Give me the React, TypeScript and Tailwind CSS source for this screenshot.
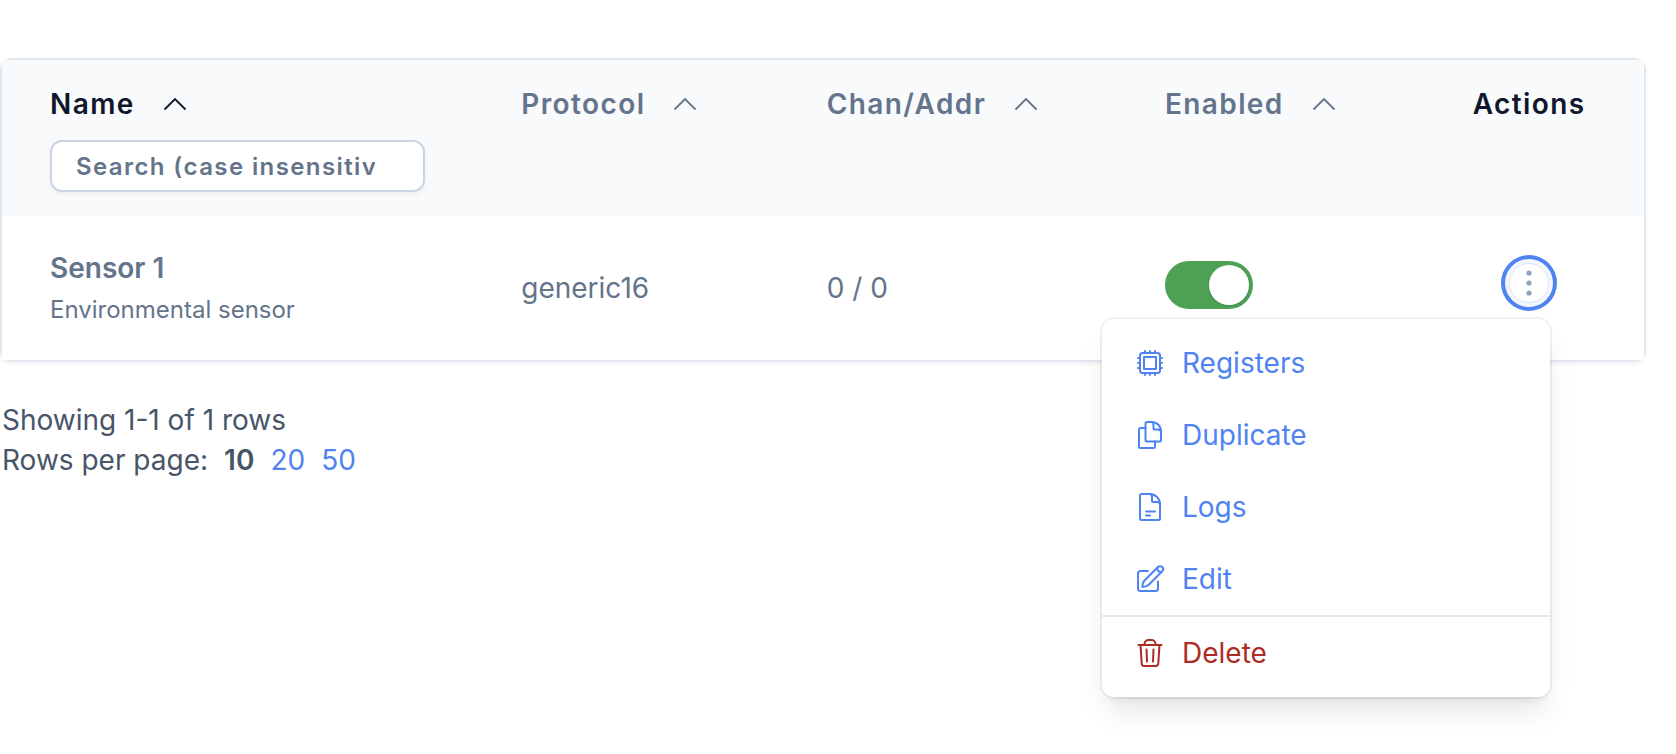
import { useState, type ReactNode } from "react";
import clsx from "clsx";

type IconProps = {
  children: ReactNode;
};

function MenuIcon({ children }: IconProps) {
  return (
    <svg
      className="h-8 w-8 shrink-0"
      viewBox="0 0 32 32"
      fill="none"
      stroke="currentColor"
      strokeWidth={2}
      strokeLinecap="round"
      strokeLinejoin="round"
      aria-hidden="true"
    >
      {children}
    </svg>
  );
}

const menuItems = [
  {
    label: "Registers",
    icon: (
      <MenuIcon>
        <rect x="6" y="6" width="20" height="20" rx="2.5" />
        <rect x="10" y="10" width="12" height="12" />
        <path d="M11 6V4M16 6V4M21 6V4M11 28v-2M16 28v-2M21 28v-2M6 11H4M6 16H4M6 21H4M28 11h-2M28 16h-2M28 21h-2" />
      </MenuIcon>
    ),
  },
  {
    label: "Duplicate",
    icon: (
      <MenuIcon>
        <path d="M17.5 3H13a1.500 1.500 0 0 0-1.500 1.500v16.500a1.500 1.500 0 0 0 1.500 1.500h12.500a1.500 1.500 0 0 0 1.500-1.500V12.500C27 7 23 3 17.500 3z" />
        <path d="M17.500 3c1.500 0 2 1 2 2.500v4a1 1 0 0 0 1 1h3c2 0 3.500 1 3.500 2.500" />
        <path d="M11.500 9H6.500A1.500 1.500 0 0 0 5 10.500v17A1.500 1.500 0 0 0 6.500 29H19.500a1.500 1.500 0 0 0 1.500-1.500v-5" />
      </MenuIcon>
    ),
  },
  {
    label: "Logs",
    icon: (
      <MenuIcon>
        <path d="M15.500 3H7.500A1.500 1.500 0 0 0 6 4.500v23A1.500 1.500 0 0 0 7.500 29h17a1.500 1.500 0 0 0 1.500-1.500v-14C26 7.500 21.500 3 15.500 3z" />
        <path d="M15.500 3c2 0 2.500 1 2.500 2.500V10a1 1 0 0 0 1 1h4.500c1.500 0 2.500 1 2.500 2.500" />
        <path d="M12 20.500h9M12 24.500h4" />
      </MenuIcon>
    ),
  },
  {
    label: "Edit",
    icon: (
      <MenuIcon>
        <path d="M14 8H6.500A2.500 2.500 0 0 0 4 10.500v15A2.500 2.500 0 0 0 6.500 28h15a2.500 2.500 0 0 0 2.500-2.500V18.500" />
        <path d="M8.500 24c0-3 .5-5 2-6.500L24 4a2.900 2.900 0 0 1 4.200 4.200L15 21.500c-1.500 1.500-3.500 2.500-6.500 2.500z" />
        <path d="M23.200 4.800c0 2.500 1.700 4.200 4.200 4.200" />
      </MenuIcon>
    ),
  },
];

const deleteIcon = (
  <MenuIcon>
    <path d="M4.500 8h23M10.500 8V7A4 4 0 0 1 14.500 3h3A4 4 0 0 1 21.500 7v1" />
    <path d="M6.500 8l1.200 18.500a2.500 2.500 0 0 0 2.500 2.500h11.600a2.500 2.500 0 0 0 2.500-2.500L25.500 8M12.500 12.500l.5 12M19.500 12.500l-.5 12" />
  </MenuIcon>
);

const columns = [
  { label: "Name", width: "w-[28.7%]", sorted: true, searchable: true },
  { label: "Protocol", width: "w-[18.6%]" },
  { label: "Chan/Addr", width: "w-[20.6%]" },
  { label: "Enabled", width: "w-[18.1%]" },
];

function SortChevron() {
  return (
    <svg className="h-6 w-6" viewBox="0 0 24 24" fill="none" stroke="currentColor" strokeWidth={1.8} aria-hidden="true">
      <path d="M1.500 17.500 12 7l10.500 10.500" />
    </svg>
  );
}

function ActionsMenu() {
  return (
    <div
      role="menu"
      className="absolute top-14 right-[46px] z-10 w-[448px] rounded-xl bg-white py-2 text-left shadow-[0_0_0_2px_rgba(0,0,0,0.05),0_20px_30px_-6px_rgba(0,0,0,0.1),0_8px_12px_-8px_rgba(0,0,0,0.1)]"
    >
      {menuItems.map((item) => (
        <button
          key={item.label}
          type="button"
          role="menuitem"
          className="flex h-[72px] w-full items-center gap-4 px-8 text-[#4f83f1] hover:bg-slate-50"
        >
          {item.icon}
          {item.label}
        </button>
      ))}
      <button
        type="button"
        role="menuitem"
        className="flex h-[74px] w-full items-center gap-4 border-t-2 border-slate-200 px-8 text-[#ad2c24] hover:bg-slate-50"
      >
        {deleteIcon}
        Delete
      </button>
    </div>
  );
}

export default function App() {
  const [enabled, setEnabled] = useState(true);
  const [open, setOpen] = useState(true);

  return (
    <main className="min-h-screen bg-white pt-[58px] pr-[30px] font-['Inter',sans-serif] text-[28px] leading-10">
      <div className="rounded-xl border-2 border-slate-200 bg-white shadow-[0_2px_4px_rgba(0,0,0,0.06)]">
        <table className="w-full table-fixed text-left text-[#64748b]">
          <thead className="bg-slate-50 tracking-wider">
            <tr>
              {columns.map((col) => (
                <th key={col.label} scope="col" className={clsx("px-12 py-6 align-top font-semibold", col.width)}>
                  <button type="button" className={clsx("flex items-center gap-7", col.sorted && "text-slate-900")}>
                    {col.label}
                    <SortChevron />
                  </button>
                  {col.searchable && (
                    <input
                      type="text"
                      aria-label="Search by name"
                      placeholder="Search (case insensitive)"
                      className="mt-4 block h-[52px] w-full rounded-xl border-2 border-slate-300 bg-white pr-12 pl-6 text-2xl shadow-[0_2px_4px_rgba(0,0,0,0.05)] outline-none placeholder:text-[#64748b]"
                    />
                  )}
                </th>
              ))}
              <th scope="col" className="w-[14%] px-12 py-6 text-center align-top font-semibold text-slate-900">
                Actions
              </th>
            </tr>
          </thead>
          <tbody className="bg-white">
            <tr>
              <td className="px-12 py-8">
                <div className="font-semibold">Sensor 1</div>
                <div className="mt-1 text-2xl leading-9">Environmental sensor</div>
              </td>
              <td className="px-12 py-8">generic16</td>
              <td className="px-12 py-8">0 / 0</td>
              <td className="px-12 pt-8 pb-[38px]">
                <button
                  type="button"
                  role="switch"
                  aria-checked={enabled}
                  aria-label="Enabled"
                  onClick={() => setEnabled(!enabled)}
                  className={clsx("flex h-12 w-[88px] rounded-full p-1", enabled ? "justify-end bg-[#4da155]" : "bg-slate-200")}
                >
                  <span className="h-10 w-10 rounded-full bg-white shadow-sm" />
                </button>
              </td>
              <td className="relative px-12 pt-8 pb-[42px]">
                <div className="flex justify-center">
                  <div className="relative flex w-full justify-center">
                    <button
                      type="button"
                      aria-label="Actions"
                      aria-expanded={open}
                      onClick={() => setOpen(!open)}
                      className="flex h-10 w-10 items-center justify-center rounded-full border border-[#dbe6fc] bg-white text-slate-400 shadow-[0_0_0_4px_#f3f7fd,0_0_0_8px_#4f83f1]"
                    >
                      <svg className="h-8 w-8" viewBox="0 0 32 32" fill="currentColor" aria-hidden="true">
                        <circle cx="16" cy="6" r="2.600" />
                        <circle cx="16" cy="16" r="2.600" />
                        <circle cx="16" cy="26" r="2.600" />
                      </svg>
                    </button>
                    {open && <ActionsMenu />}
                  </div>
                </div>
              </td>
            </tr>
          </tbody>
        </table>
      </div>

      <div className="mt-[38px] pl-0.5 text-[#475569]">
        <p>Showing 1-1 of 1 rows</p>
        <div className="flex gap-4">
          <span>Rows per page:</span>
          <span className="font-semibold">10</span>
          <a href="#20" className="text-[#4f83f1]">20</a>
          <a href="#50" className="text-[#4f83f1]">50</a>
        </div>
      </div>
    </main>
  );
}
